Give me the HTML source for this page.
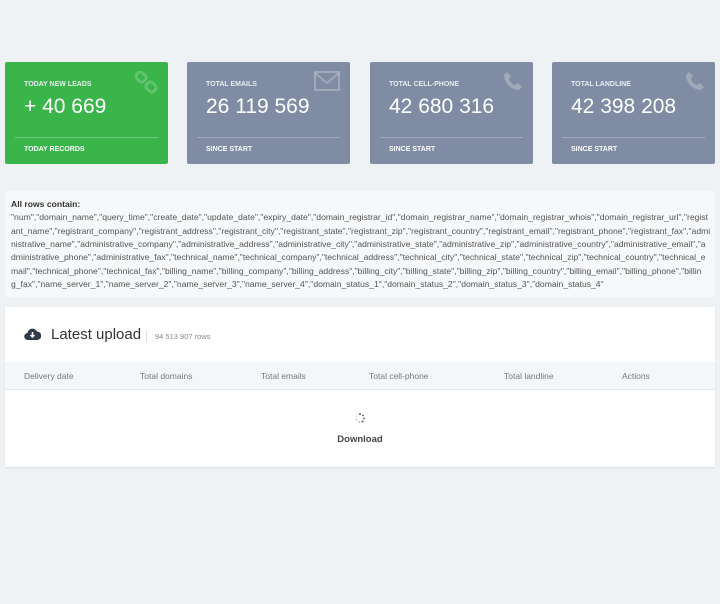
<!DOCTYPE html><html><head><style>
body{margin:0;width:720px;height:604px;background:#eff2f5;font-family:"Liberation Sans",sans-serif;position:relative;overflow:hidden}
.card{position:absolute;top:62px;width:163px;height:102px;border-radius:2px;color:#fff}
.card .t{position:absolute;left:19px;top:19px;font-size:7px;font-weight:bold;color:#e8ecf0}
.card .n{position:absolute;left:19px;top:33px;font-size:21px}
.card .l{position:absolute;left:10px;right:10px;top:75px;border-top:1px solid rgba(255,255,255,.25)}
.card .b{position:absolute;left:19px;top:84px;font-size:7px;font-weight:bold}
.card svg{position:absolute;right:10px;top:9px}
.g{background:#3ab54a}.s{background:#7f8ca3}
.info{position:absolute;left:5px;top:191px;width:710px;height:106px;background:#f6f8fa;border-radius:2px}
.info div{position:absolute;left:6px;font-size:8.6px;color:#555;white-space:nowrap}
.panel{position:absolute;left:5px;top:307px;width:710px;height:160px;background:#fff;border-radius:2px;box-shadow:0 1px 2px rgba(0,0,0,.08)}
.th{position:absolute;top:55px;left:0;right:0;height:27px;background:#f4f7fa;border-bottom:1px solid #e3e7ec}
.th span{position:absolute;top:9px;font-size:8.5px;color:#777}
</style></head><body>
<div class="card g"><div class="t">TODAY NEW LEADS</div><div class="n">+ 40 669</div><div class="l"></div><div class="b">TODAY RECORDS</div>
<svg width="24" height="24" viewBox="0 0 24 24" fill="none" stroke="rgba(255,255,255,.2)" stroke-width="3"><rect x="2" y="2" width="10" height="8" rx="3" transform="rotate(45 7 6)"/><rect x="12" y="12" width="10" height="8" rx="3" transform="rotate(45 17 16)"/></svg></div>
<div class="card s" style="left:187px"><div class="t">TOTAL EMAILS</div><div class="n">26 119 569</div><div class="l"></div><div class="b">SINCE START</div>
<svg width="26" height="20" viewBox="0 0 26 20" fill="none" stroke="rgba(255,255,255,.25)" stroke-width="2"><rect x="1" y="1" width="24" height="18"/><path d="M1 2l12 10 12-10"/></svg></div>
<div class="card s" style="left:370px"><div class="t">TOTAL CELL-PHONE</div><div class="n">42 680 316</div><div class="l"></div><div class="b">SINCE START</div>
<svg width="20" height="20" viewBox="0 0 20 20"><path d="M4 1l4 4-2 3c1 3 3 5 6 6l3-2 4 4-3 3C8 19 1 12 1 4z" fill="rgba(255,255,255,.25)"/></svg></div>
<div class="card s" style="left:552px"><div class="t">TOTAL LANDLINE</div><div class="n">42 398 208</div><div class="l"></div><div class="b">SINCE START</div>
<svg width="20" height="20" viewBox="0 0 20 20"><path d="M4 1l4 4-2 3c1 3 3 5 6 6l3-2 4 4-3 3C8 19 1 12 1 4z" fill="rgba(255,255,255,.25)"/></svg></div>
<div style="position:absolute;left:5px;top:62px;width:163px"></div>
<style>.card.g{left:5px}</style>
<div class="info">
<div style="top:8px;font-weight:bold;color:#333">All rows contain:</div>
<div style="top:21px">"num","domain_name","query_time","create_date","update_date","expiry_date","domain_registrar_id","domain_registrar_name","domain_registrar_whois","domain_registrar_url","regist</div>
<div style="top:35px">ant_name","registrant_company","registrant_address","registrant_city","registrant_state","registrant_zip","registrant_country","registrant_email","registrant_phone","registrant_fax","admi</div>
<div style="top:48px">nistrative_name","administrative_company","administrative_address","administrative_city","administrative_state","administrative_zip","administrative_country","administrative_email","a</div>
<div style="top:61px">dministrative_phone","administrative_fax","technical_name","technical_company","technical_address","technical_city","technical_state","technical_zip","technical_country","technical_e</div>
<div style="top:75px">mail","technical_phone","technical_fax","billing_name","billing_company","billing_address","billing_city","billing_state","billing_zip","billing_country","billing_email","billing_phone","billin</div>
<div style="top:88px">g_fax","name_server_1","name_server_2","name_server_3","name_server_4","domain_status_1","domain_status_2","domain_status_3","domain_status_4"</div>
</div>
<div class="panel">
<svg style="position:absolute;left:19px;top:20px" width="17" height="14" viewBox="0 0 17 14"><path d="M4 13a3.5 3.5 0 0 1-.5-7A5 5 0 0 1 13 4.5a4 4 0 0 1 0 8.5z" fill="#2f3b4a"/><path d="M8.5 5v5M6.5 8l2 2 2-2" stroke="#fff" stroke-width="1.5" fill="none"/></svg>
<div style="position:absolute;left:46px;top:19px;font-size:15px;color:#333">Latest upload</div>
<div style="position:absolute;left:141px;top:24px;height:11px;border-left:1px solid #ddd"></div>
<div style="position:absolute;left:150px;top:25px;font-size:7.5px;color:#888">94 513 907 rows</div>
<div class="th"><span style="left:19px">Delivery date</span><span style="left:135px">Total domains</span><span style="left:256px">Total emails</span><span style="left:364px">Total cell-phone</span><span style="left:499px">Total landline</span><span style="left:617px">Actions</span></div>
<svg style="position:absolute;left:350px;top:106px" width="10" height="10" viewBox="0 0 10 10" fill="#555"><circle cx="5" cy="1" r="1"/><circle cx="8" cy="2.5" r=".9"/><circle cx="9" cy="5.5" r=".9"/><circle cx="7.5" cy="8.5" r="1"/><circle cx="4.5" cy="9" r=".8" opacity=".6"/><circle cx="1.5" cy="7" r=".7" opacity=".5"/><circle cx="1.2" cy="3.8" r=".6" opacity=".4"/></svg>
<div style="position:absolute;left:0;right:0;top:127px;text-align:center;font-size:9.5px;font-weight:bold;color:#444">Download</div>
</div>
</body></html>
